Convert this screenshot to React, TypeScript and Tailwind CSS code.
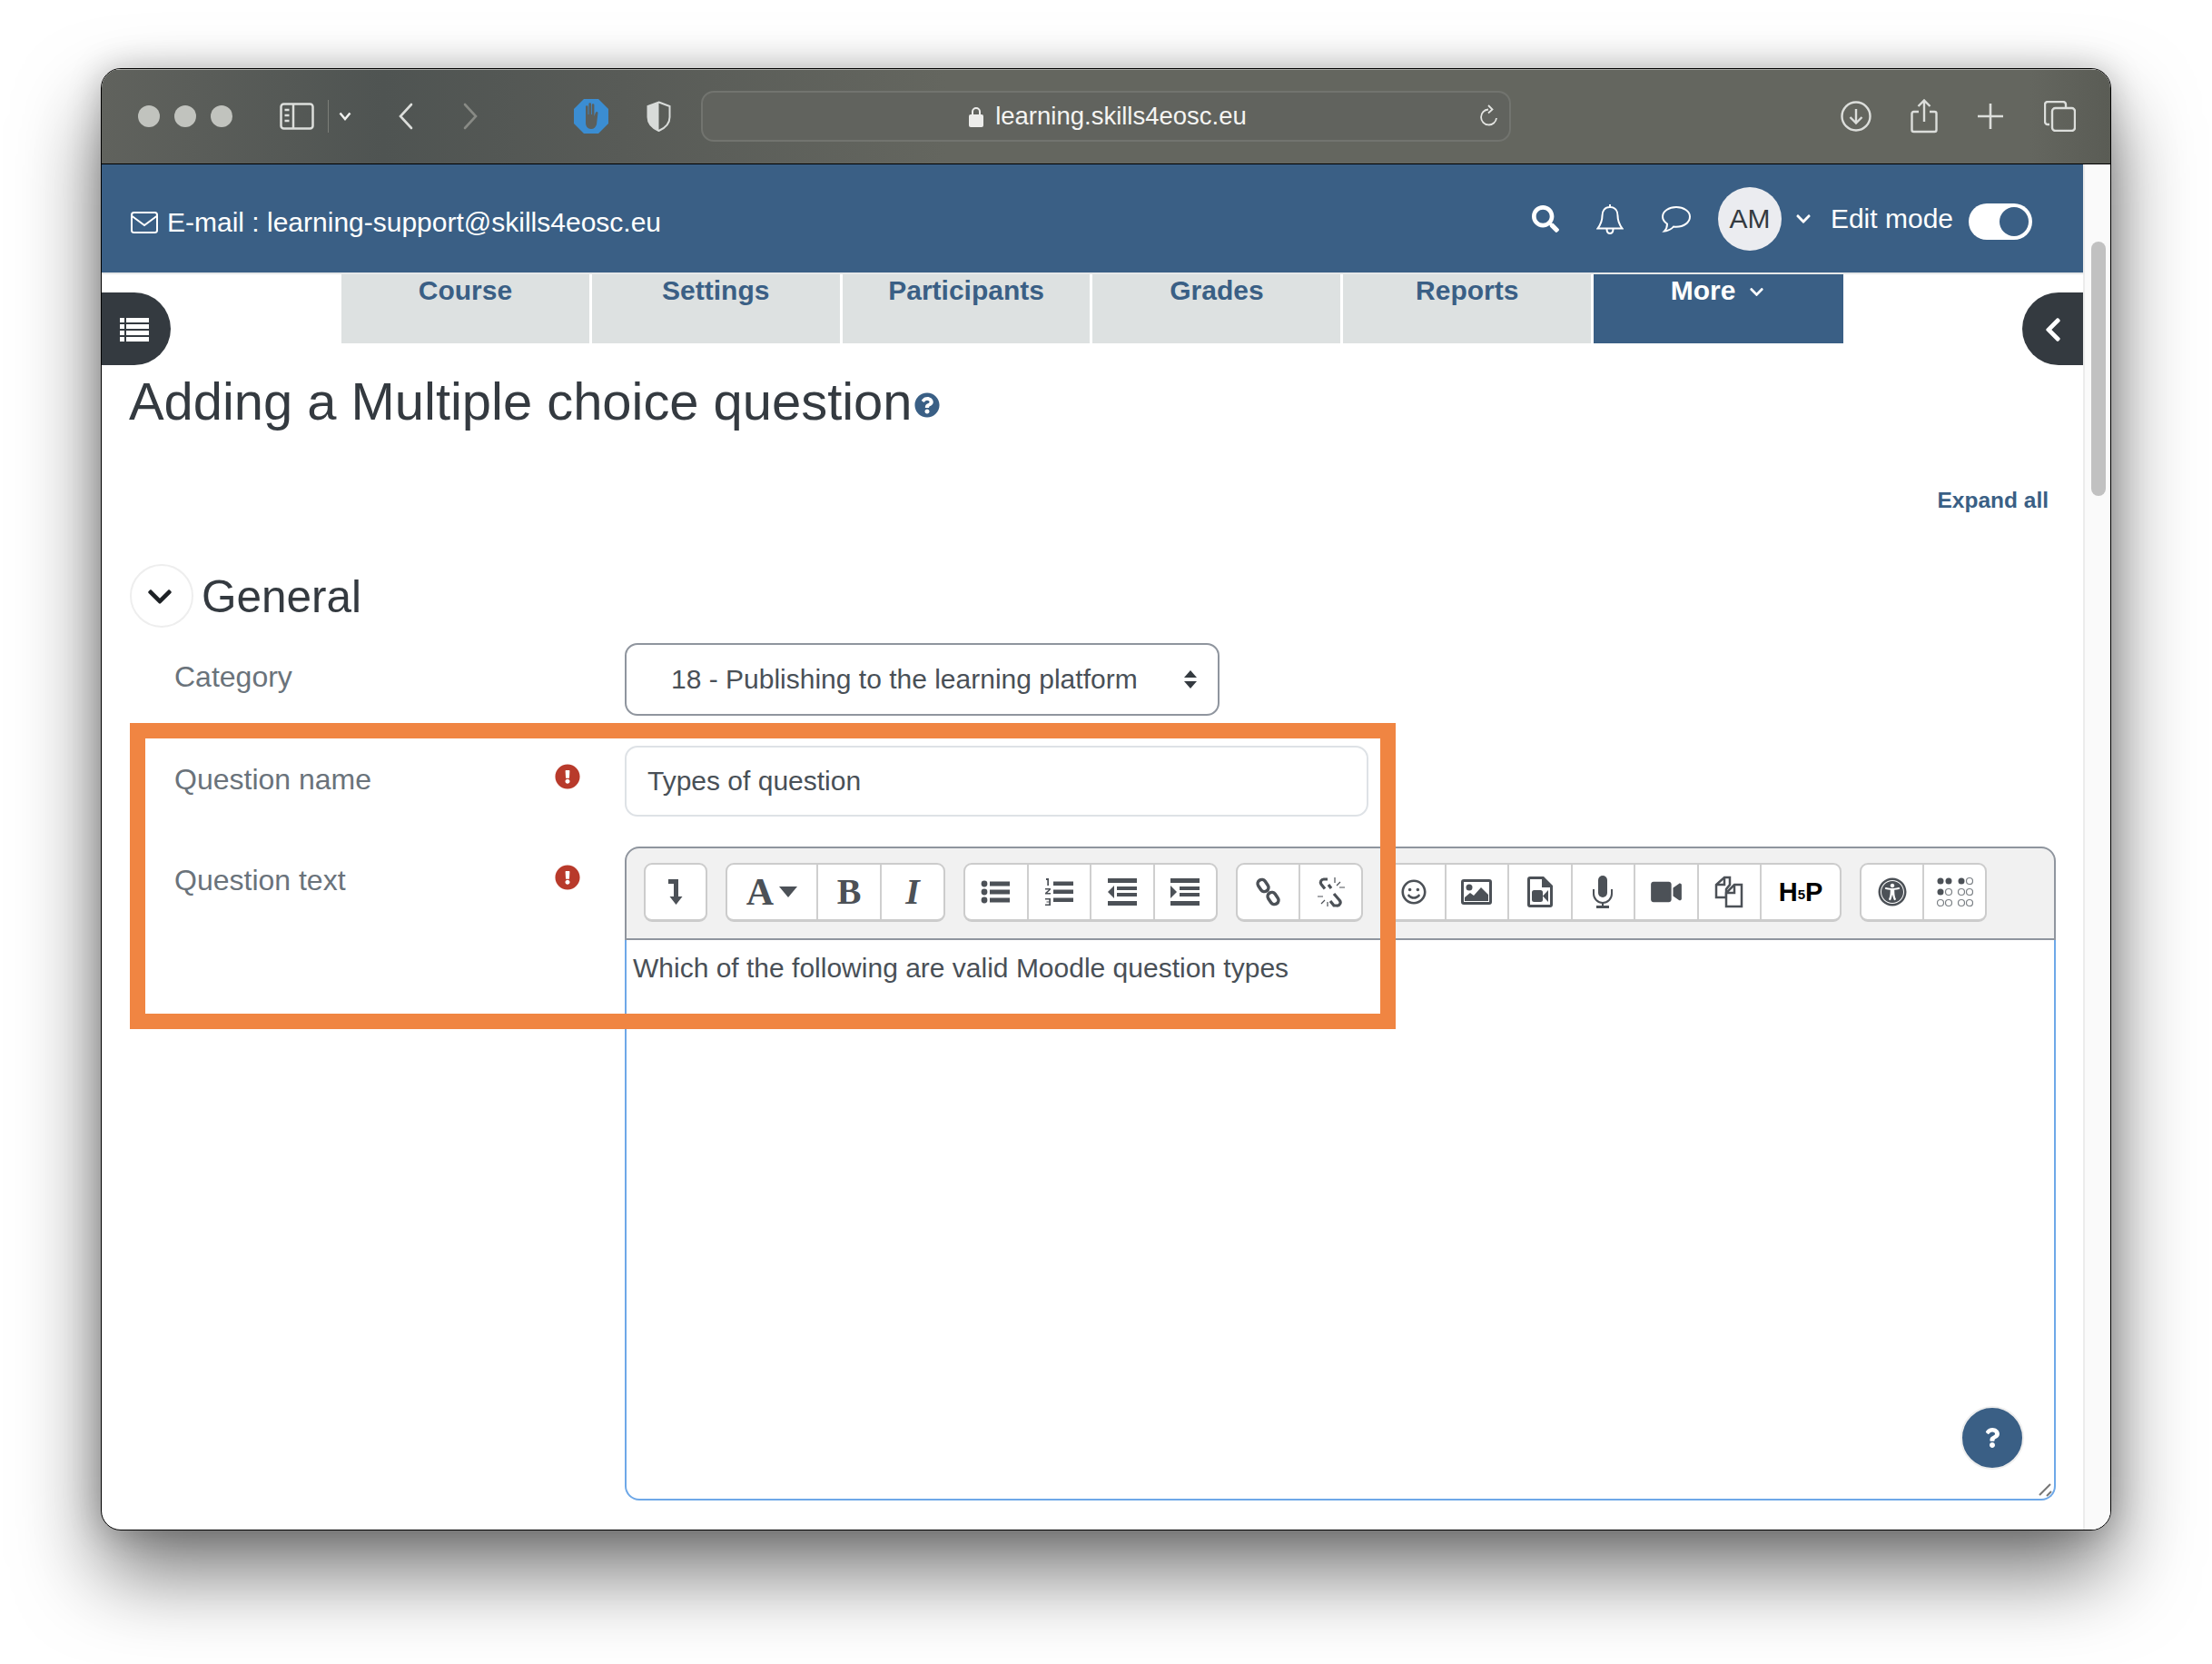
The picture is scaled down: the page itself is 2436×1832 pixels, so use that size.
import type { ReactNode } from "react";
import {
  FaChevronDown,
  FaChevronLeft,
  FaExclamationCircle,
  FaQuestion,
  FaQuestionCircle,
  FaRegSmile,
  FaSearch,
  FaUniversalAccess,
  FaVideo,
} from "react-icons/fa";

const BLUE = "text-[#3a5f85]";

function Group({ className, children }: { className: string; children: ReactNode }) {
  return (
    <div className={`flex h-[65px] shrink-0 divide-x-2 divide-[#cfcfcf] rounded-[9px] border-2 border-b-[3px] border-[#cccccc] bg-white ${className}`}>
      {children}
    </div>
  );
}

function Tool({ className = "flex-1", children }: { className?: string; children: ReactNode }) {
  return <div className={`flex items-center justify-center text-[#4c5157] ${className}`}>{children}</div>;
}

function ListIcon({ kind }: { kind: "bullet" | "number" | "outdent" | "indent" }) {
  return (
    <svg width="34" height="34" viewBox="0 0 34 34" fill="#4c5157">
      {kind === "bullet" && (
        <g>
          <circle cx="4" cy="8" r="3.4" />
          <circle cx="4" cy="17" r="3.4" />
          <circle cx="4" cy="26" r="3.4" />
          <rect x="10" y="5.5" width="22" height="5" />
          <rect x="10" y="14.5" width="22" height="5" />
          <rect x="10" y="23.5" width="22" height="5" />
        </g>
      )}
      {kind === "number" && (
        <g>
          <rect x="11" y="5.5" width="22" height="4.5" />
          <rect x="11" y="14.5" width="22" height="4.5" />
          <rect x="11" y="23.5" width="22" height="4.5" />
          <path d="M3 2h3v8H4.300V4H3zM2 13h6v1.600L4.400 18H8v1.500H2v-1.500L6 14.500H2zM2 24h6v8H2v-1.400h4.300v-2H3.500v-1.200h2.800v-2H2z" />
        </g>
      )}
      {kind === "outdent" && (
        <g>
          <rect x="1" y="2" width="32" height="5" />
          <rect x="11" y="11" width="22" height="4" />
          <rect x="11" y="18" width="22" height="4" />
          <rect x="1" y="27" width="32" height="5" />
          <path d="M8 10v14l-7-7z" />
        </g>
      )}
      {kind === "indent" && (
        <g>
          <rect x="1" y="2" width="32" height="5" />
          <rect x="11" y="11" width="22" height="4" />
          <rect x="11" y="18" width="22" height="4" />
          <rect x="1" y="27" width="32" height="5" />
          <path d="M1 10v14l7-7z" />
        </g>
      )}
    </svg>
  );
}

function Toolbar() {
  return (
    <div className="flex h-[103px] shrink-0 gap-[20px] rounded-t-[16px] border-2 border-[#8f959e] bg-[#f1f1f1] pt-[16px] pl-[19px]">
      <Group className="w-[70px]">
        <Tool>
          <svg width="18" height="30" viewBox="0 0 18 30" fill="#4c5157">
            <path d="M1 1h11v19h4.500l-7 9L2.500 20H7V6H1z" />
          </svg>
        </Tool>
      </Group>
      <Group className="w-[242px]">
        <Tool className="w-[100px] gap-[6px] shrink-0">
          <span className="font-['Liberation_Serif',serif] text-[42px] leading-none font-bold">A</span>
          <svg width="20" height="12" viewBox="0 0 20 12" fill="#4c5157">
            <path d="M0 0h20L10 12z" />
          </svg>
        </Tool>
        <Tool>
          <span className="font-['Liberation_Serif',serif] text-[40px] leading-none font-bold">B</span>
        </Tool>
        <Tool>
          <span className="font-['Liberation_Serif',serif] text-[40px] leading-none font-bold italic">I</span>
        </Tool>
      </Group>
      <Group className="w-[280px]">
        <Tool><ListIcon kind="bullet" /></Tool>
        <Tool><ListIcon kind="number" /></Tool>
        <Tool><ListIcon kind="outdent" /></Tool>
        <Tool><ListIcon kind="indent" /></Tool>
      </Group>
      <Group className="w-[140px]">
        <Tool>
          <svg width="30" height="34" viewBox="0 0 30 34" fill="none" stroke="#4c5157" strokeWidth="3.500">
            <rect x="-7" y="-4.500" width="14" height="9" rx="4.500" transform="translate(9 10) rotate(55)" />
            <rect x="-7" y="-4.500" width="14" height="9" rx="4.500" transform="translate(20 24) rotate(55)" />
          </svg>
        </Tool>
        <Tool>
          <svg width="32" height="34" viewBox="0 0 32 34" fill="none" stroke="#4c5157">
            <path d="M12 3H8a3.500 3.500 0 0 0-3 5.500l4 5" strokeWidth="3.200" />
            <path d="M13 9l3 4M19 19l6 7a3.500 3.500 0 0 1-3 6h-3l-4-5" strokeWidth="3.200" />
            <path d="M20 1v6M26 6l-4 4M31 12h-6M1 22h6M5 30l4-4M12 28v5" strokeWidth="1.200" />
          </svg>
        </Tool>
      </Group>
      <Group className="w-[507px]">
        <Tool><FaRegSmile className="h-[28px] w-[28px]" /></Tool>
        <Tool>
          <svg width="34" height="28" viewBox="0 0 34 28" fill="#4c5157">
            <path fillRule="evenodd" d="M3 0h28a3 3 0 0 1 3 3v22a3 3 0 0 1-3 3H3a3 3 0 0 1-3-3V3a3 3 0 0 1 3-3zM3 3v22h28V3z" />
            <circle cx="9" cy="9" r="3.500" />
            <path d="M4 24v-4l6-5 4 3 8-9 8 8v7z" />
          </svg>
        </Tool>
        <Tool>
          <svg width="28" height="34" viewBox="0 0 28 34" fill="#4c5157">
            <path fillRule="evenodd" d="M3 0h15l10 10v21a3 3 0 0 1-3 3H3a3 3 0 0 1-3-3V3a3 3 0 0 1 3-3zM3 3v28h22V12h-9V3z" />
            <rect x="5" y="15" width="12" height="13" rx="2.500" />
            <path d="M23 15v13l-6-6.500z" />
          </svg>
        </Tool>
        <Tool>
          <svg width="22" height="36" viewBox="0 0 22 36" fill="#4c5157">
            <rect x="6" y="0" width="10" height="24" rx="5" />
            <path d="M1 15v5a10 10 0 0 0 20 0v-5" fill="none" stroke="#4c5157" strokeWidth="2" />
            <rect x="10" y="29" width="2" height="5" />
            <rect x="4" y="33" width="14" height="3" />
          </svg>
        </Tool>
        <Tool><FaVideo className="h-[30px] w-[34px]" /></Tool>
        <Tool>
          <svg width="32" height="36" viewBox="0 0 32 36" fill="none" stroke="#4c5157" strokeWidth="2.500">
            <path d="M11 2h6v8l-4 5v9H2V10z" />
            <path d="M11 2v8H3" />
            <path d="M22 10h8v24H13V19z" fill="#fff" />
            <path d="M22 10v9h-9" />
          </svg>
        </Tool>
        <Tool className="w-[86px] shrink-0">
          <span className="flex items-center font-['Liberation_Sans',sans-serif] text-[29px] leading-none font-bold text-black">
            H
            <span className="mt-[4px] text-[15px]">5</span>
            P
          </span>
        </Tool>
      </Group>
      <Group className="w-[140px]">
        <Tool><FaUniversalAccess className="h-[32px] w-[32px]" /></Tool>
        <Tool>
          <svg width="40" height="36" viewBox="0 0 40 36" stroke="#7b8085" strokeWidth="1.200" fill="none">
            <circle cx="4" cy="6" r="3.500" fill="#4c5157" stroke="none" />
            <circle cx="13" cy="6" r="3.500" fill="#4c5157" stroke="none" />
            <circle cx="27" cy="6" r="3.500" fill="#4c5157" stroke="none" />
            <circle cx="36" cy="6" r="3.500" />
            <circle cx="4" cy="18" r="3.500" fill="#4c5157" stroke="none" />
            <circle cx="13" cy="18" r="3.500" />
            <circle cx="27" cy="18" r="3.500" />
            <circle cx="36" cy="18" r="3.500" />
            <circle cx="4" cy="30" r="3.500" />
            <circle cx="13" cy="30" r="3.500" />
            <circle cx="27" cy="30" r="3.500" />
            <circle cx="36" cy="30" r="3.500" />
          </svg>
        </Tool>
      </Group>
    </div>
  );
}

function TitleBar() {
  const stroke = "#dcdedb";
  return (
    <div className="flex h-[105px] shrink-0 items-center border-t border-b border-t-[#a9aaa6] border-b-black bg-[linear-gradient(90deg,#60625d_0%,#4f5452_14%,#585b57_26%,#64665f_42%,#64665f_96%,#5a5c55_100%)] pb-[1px]">
      <div className="ml-[40px] flex gap-[16px]">
        <span className="h-[24px] w-[24px] rounded-full bg-[#c1c3be]" />
        <span className="h-[24px] w-[24px] rounded-full bg-[#c1c3be]" />
        <span className="h-[24px] w-[24px] rounded-full bg-[#c1c3be]" />
      </div>
      <svg className="ml-[52px]" width="38" height="30" viewBox="0 0 38 30" fill="none" stroke={stroke} strokeWidth="2.500">
        <rect x="1.500" y="1.500" width="35" height="27" rx="3" />
        <path d="M15 2v26M5.500 8h5M5.500 14h5M5.500 20h5" />
      </svg>
      <span className="ml-[15px] h-[36px] w-px bg-[#7c7e79]" />
      <svg className="ml-[11px]" width="14" height="10" viewBox="0 0 14 10" fill="none" stroke="#f0f0ee" strokeWidth="2.500">
        <path d="M1.500 1.500 7 8l5.500-6.500" />
      </svg>
      <svg className="ml-[51px]" width="17" height="30" viewBox="0 0 17 30" fill="none" stroke={stroke} strokeWidth="2.600" strokeLinecap="round">
        <path d="M15 2 3 15l12 13" />
      </svg>
      <svg className="ml-[55px]" width="17" height="30" viewBox="0 0 17 30" fill="none" stroke="#888a85" strokeWidth="2.600" strokeLinecap="round">
        <path d="m2 2 12 13L2 28" />
      </svg>
      <svg className="ml-[105px]" width="38" height="38" viewBox="0 0 38 38">
        <path d="M11 0h16l11 11v16L27 38H11L0 27V11z" fill="#3b8dd2" />
        <path d="M13 21V8.500a1.300 1.300 0 0 1 2.600 0V17h.8V5.500a1.300 1.300 0 0 1 2.600 0V17h.8V6.500a1.300 1.300 0 0 1 2.600 0V19l1.500-4c.8-1.800 3-1 2.500.8L25 28c-1 3-3 5-6 5-4 0-6-3-6-7z" fill="#5b5f5c" />
      </svg>
      <svg className="ml-[42px]" width="27" height="34" viewBox="0 0 27 34">
        <path d="M13.500 1.500 25.500 6v12c0 7-5 12-12 15C6.500 30 1.500 25 1.500 18V6z" fill="none" stroke="#d8dbd9" strokeWidth="2" />
        <path d="M13.500 1.500 1.500 6v12c0 7 5 12 12 15z" fill="#d8dbd9" />
      </svg>
      <div className="relative ml-[33px] flex h-[56px] w-[892px] items-center justify-center rounded-[14px] border-2 border-[#72746f] bg-[#61635e] pl-[4px]">
        <svg width="16" height="23" viewBox="0 0 16 23" fill="#ececea">
          <path d="M4 10V6a4 4 0 0 1 8 0v4" fill="none" stroke="#ececea" strokeWidth="2" />
          <rect y="9" width="16" height="14" rx="2" />
        </svg>
        <span className="ml-[13px] font-['Liberation_Sans',sans-serif] text-[27.5px] leading-none text-[#f4f4f2]">learning.skills4eosc.eu</span>
        <svg className="absolute right-[11px]" width="22" height="26" viewBox="0 0 22 26" fill="none" stroke="#e3e4e1" strokeWidth="1.800">
          <path d="M19 15a8.500 8.500 0 1 1-9-9.500M10 1l4.500 4.500-4.500 4" />
        </svg>
      </div>
      <svg className="ml-[363px]" width="34" height="34" viewBox="0 0 34 34" fill="none" stroke={stroke} strokeWidth="2.400">
        <circle cx="17" cy="17" r="15.500" />
        <path d="M17 9v15M10.500 18l6.500 6.500 6.500-6.500" />
      </svg>
      <svg className="ml-[43px]" width="30" height="38" viewBox="0 0 30 38" fill="none" stroke={stroke} strokeWidth="2.400">
        <path d="M9 14H3.500a2 2 0 0 0-2 2v18a2 2 0 0 0 2 2h23a2 2 0 0 0 2-2V16a2 2 0 0 0-2-2H21" />
        <path d="M15 25V2M8.500 8 15 1.500 21.500 8" />
      </svg>
      <svg className="ml-[44px]" width="28" height="28" viewBox="0 0 28 28" stroke={stroke} strokeWidth="2.600">
        <path d="M14 0v28M0 14h28" />
      </svg>
      <svg className="ml-[45px]" width="35" height="34" viewBox="0 0 35 34" fill="none" stroke={stroke} strokeWidth="2.400">
        <path d="M6 26H4a3 3 0 0 1-3-3V4a3 3 0 0 1 3-3h17a3 3 0 0 1 3 3v3" />
        <rect x="9" y="8" width="25" height="25" rx="3.500" />
      </svg>
    </div>
  );
}

function Header() {
  return (
    <div className="flex h-[119px] shrink-0 items-center bg-[#3a5f85] pr-[56px] pl-[32px] text-white">
      <svg className="mt-[8px]" width="30" height="24" viewBox="0 0 30 24" fill="none" stroke="#fff" strokeWidth="2">
        <rect x="1" y="1" width="28" height="22" rx="2.500" />
        <path d="m1.500 5 13.500 10L28.500 5" />
      </svg>
      <span className="mt-[8px] ml-[10px] text-[30px] leading-none">E-mail : learning-support@skills4eosc.eu</span>
      <FaSearch className="ml-auto h-[30px] w-[30px]" />
      <svg className="ml-[41px]" width="30" height="34" viewBox="0 0 30 34" fill="none" stroke="#fff" strokeWidth="2">
        <path d="M15 4C9 4 6.500 8.500 6.500 13.500c0 6-2 10-5 14h27c-3-4-5-8-5-14C23.500 8.500 21 4 15 4zM15 1v3M11.500 28c0 3 1.500 5 3.500 5s3.500-2 3.500-5" />
      </svg>
      <svg className="ml-[41px]" width="33" height="30" viewBox="0 0 33 30" fill="none" stroke="#fff" strokeWidth="2">
        <path d="M17 2C9 2 2 6.500 2 12.500c0 3 2 6 5 8 0 3-1 6-3 8 4-.5 8-2.500 10-5 1 .2 2 .2 3 .2 8 0 15-4.500 15-11.200C32 6.500 25 2 17 2z" />
      </svg>
      <div className="ml-[30px] flex h-[70px] w-[70px] shrink-0 items-center justify-center rounded-full bg-[#ebecf0] text-[30px] text-[#343a40]">AM</div>
      <FaChevronDown className="ml-[15px] h-[18px] w-[18px]" />
      <span className="ml-[21px] text-[30px] leading-none">Edit mode</span>
      <div className="mt-[6px] ml-[17px] flex h-[40px] w-[70px] shrink-0 items-center justify-end rounded-full bg-white pr-[4px]">
        <span className="h-[32px] w-[32px] rounded-full bg-[#3a5f85]" />
      </div>
    </div>
  );
}

function Tabs() {
  const tabs = ["Course", "Settings", "Participants", "Grades", "Reports"];
  return (
    <div className="ml-[264px] flex h-[76px] w-[1654px] shrink-0 text-[30px] leading-[36px] font-bold">
      {tabs.map((tab) => (
        <div key={tab} className={`flex-1 border-r-[3px] border-white bg-[#dde1e1] text-center ${BLUE}`}>
          {tab}
        </div>
      ))}
      <div className="flex flex-1 justify-center gap-[15px] bg-[#3a5f85] pr-[2px] text-white">
        More
        <FaChevronDown className="mt-[11px] h-[17px] w-[17px]" />
      </div>
    </div>
  );
}

function FieldLabel({ text, required }: { text: string; required?: boolean }) {
  return (
    <div className="flex w-[496px] shrink-0 justify-between pr-[49px] text-[32px] leading-[74px] text-[#6a737b]">
      {text}
      {required ? <FaExclamationCircle className="mt-[20px] h-[28px] w-[28px] text-[#b83a2b]" /> : null}
    </div>
  );
}

export default function App() {
  return (
    <div className="h-[1832px] w-[2436px] overflow-hidden bg-white pt-[75px] pl-[111px] font-['Liberation_Sans',sans-serif]">
      <div className="relative flex h-[1610px] w-[2214px] flex-col overflow-hidden rounded-[22px] border border-black bg-white shadow-[0_46px_90px_rgba(0,0,0,0.55),0_0_36px_rgba(0,0,0,0.22)]">
        <TitleBar />
        <div className="flex min-h-0 flex-1">
          <main className="relative w-[2182px] shrink-0">
            <Header />
            <div className="h-[2px] bg-[#e6e8e9]" />
            <Tabs />

            <div className="absolute top-[141px] left-0 flex h-[80px] w-[76px] items-center justify-center rounded-r-[40px] bg-[#343a40] pr-[4px] text-white">
              <svg className="mt-[2px]" width="32" height="26" viewBox="0 0 32 26" fill="#fff">
                <path d="M0 0h5v5H0zM7 0h25v5H7zM0 7h5v5H0zM7 7h25v5H7zM0 14h5v5H0zM7 14h25v5H7zM0 21h5v5H0zM7 21h25v5H7z" />
              </svg>
            </div>
            <div className="absolute top-[141px] right-0 flex h-[80px] w-[67px] items-center justify-center rounded-l-[40px] bg-[#343a40] text-white">
              <FaChevronLeft className="mt-[2px] h-[30px] w-[24px]" />
            </div>

            <h1 className="mt-[30px] flex h-[70px] items-center pl-[30px] text-[57.9px] leading-none text-[#343a40]">
              Adding a Multiple choice question
              <FaQuestionCircle className={`mt-[6px] ml-[3px] h-[28px] w-[28px] ${BLUE}`} />
            </h1>

            <div className={`mt-[55px] h-[36px] pr-[38px] text-right text-[24.5px] leading-[36px] font-bold ${BLUE}`}>Expand all</div>

            <div className="mt-[52px] flex h-[70px] items-center pl-[31px]">
              <div className="flex h-[70px] w-[70px] items-center justify-center rounded-full border-2 border-[#eeeeee] pr-[4px] text-[#1d2125]">
                <FaChevronDown className="mt-[2px] h-[30px] w-[30px]" />
              </div>
              <h2 className="mt-[1px] ml-[9px] text-[49.5px] leading-none text-[#343a40]">General</h2>
            </div>

            <div className="mt-[17px] flex h-[79px] pl-[80px]">
              <FieldLabel text="Category" />
              <div className="flex h-[80px] w-[655px] items-center justify-between rounded-[14px] border-2 border-[#8f959e] pr-[22px] pb-[1px] pl-[49px] text-[30px] text-[#495057]">
                18 - Publishing to the learning platform
                <svg width="16" height="20" viewBox="0 0 16 20" fill="#343a40">
                  <path d="M8 0l7 8H1zM8 20l7-8H1z" />
                </svg>
              </div>
            </div>

            <div className="mt-[34px] flex h-[78px] pl-[80px]">
              <FieldLabel text="Question name" required />
              <div className="flex h-[78px] w-[819px] items-center rounded-[14px] border-2 border-[#dee2e6] pb-[1px] pl-[23px] text-[30px] text-[#495057]">Types of question</div>
            </div>

            <div className="mt-[33px] flex pl-[80px]">
              <FieldLabel text="Question text" required />
              <div className="flex h-[720px] w-[1576px] flex-col">
                <Toolbar />
                <div className="relative flex-1 rounded-b-[16px] border-x-2 border-b-2 border-[#6ea8e8] pt-[13px] pl-[7px] text-[30px] leading-[36px] text-[#495057]">
                  Which of the following are valid Moodle question types
                  <div className="absolute right-[33px] bottom-[32px] flex h-[70px] w-[70px] items-center justify-center rounded-full border-2 border-[#eeeeee] bg-[#3a5f85] text-white">
                    <FaQuestion className="h-[22px] w-[22px]" />
                  </div>
                  <svg className="absolute right-[2px] bottom-[2px]" width="16" height="16" viewBox="0 0 16 16" stroke="#777" strokeWidth="2">
                    <path d="M2 14 14 2M10 15l5-5" />
                  </svg>
                </div>
              </div>
            </div>
          </main>

          <div className="flex-1 border-l-2 border-[#ececec] bg-[#fafafa] pt-[85px] pl-[7px]">
            <div className="h-[280px] w-[16px] rounded-full bg-[#c1c1c1]" />
          </div>
        </div>

        <div className="absolute top-[720px] left-[31px] h-[337px] w-[1394px] border-[17px] border-[#f08542]" />
      </div>
    </div>
  );
}
